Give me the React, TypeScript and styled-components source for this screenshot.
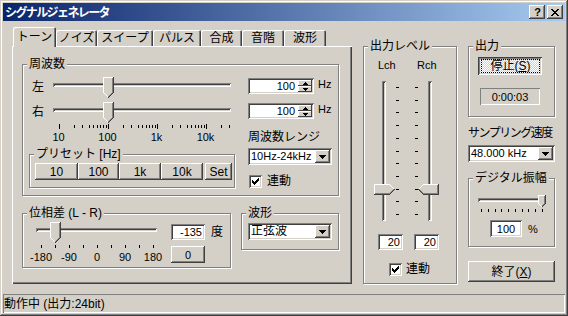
import React from "react";
import styled, { createGlobalStyle, css } from "styled-components";

const FACE = "#d4d0c8";
const HI = "#ffffff";
const SH = "#808080";
const DK = "#404040";

const GlobalStyle = createGlobalStyle`
  html, body { margin: 0; padding: 0; background: ${FACE}; }
  body {
    font-family: "Liberation Sans", "Noto Sans CJK JP", sans-serif;
    font-size: 12px;
    line-height: 14px;
    color: #000;
  }
  *, *::before, *::after { box-sizing: border-box; }
`;

const raised = css`
  box-shadow: inset -1px -1px ${DK}, inset 1px 1px ${HI}, inset -2px -2px ${SH}, inset 2px 2px ${FACE};
`;
const sunken = css`
  box-shadow: inset 1px 1px ${SH}, inset -1px -1px ${HI}, inset 2px 2px ${DK}, inset -2px -2px ${FACE};
`;

/* ---------- pixel drawings ---------- */
const PixSvg = styled.svg`
  display: block;
  flex: none;
`;

const COLORS: Record<string, string> = { w: HI, d: DK, g: SH, f: FACE, k: "#000" };

const PixelArt = ({ rows }: { rows: string[] }) => {
  const paths: Record<string, string> = {};
  rows.forEach((r, y) => {
    for (let x = 0; x < r.length; x++) {
      const c = r[x];
      if (c === ".") continue;
      paths[c] = (paths[c] || "") + `M${x} ${y}h1v1h-1z`;
    }
  });
  const w = Math.max(...rows.map((r) => r.length));
  const h = rows.length;
  return (
    <PixSvg width={w} height={h} viewBox={`0 0 ${w} ${h}`} shapeRendering="crispEdges">
      {Object.entries(paths).map(([c, d]) => (
        <path key={c} d={d} fill={COLORS[c]} />
      ))}
    </PixSvg>
  );
};

function downThumb(w: number, body: number): string[] {
  const rows: string[] = [];
  rows.push("w".repeat(w - 1) + "d");
  for (let y = 1; y < body; y++) rows.push("w" + "f".repeat(w - 3) + "gd");
  for (let k = 1; ; k++) {
    const left = k;
    const right = w - 1 - k;
    if (left > right) break;
    let r = "";
    for (let x = 0; x < w; x++) {
      if (x < left || x > right) r += ".";
      else if (x === right) r += "d";
      else if (x === left) r += "w";
      else if (x === right - 1) r += "g";
      else r += "f";
    }
    rows.push(r);
  }
  return rows;
}
function transpose(rows: string[]): string[] {
  const w = rows[0].length;
  const out: string[] = [];
  for (let x = 0; x < w; x++) out.push(rows.map((r) => r[x] || ".").join(""));
  return out;
}
const THUMB_DOWN = downThumb(11, 16);
const THUMB_SMALL = downThumb(8, 9);
const THUMB_RIGHT = transpose(THUMB_DOWN);
const THUMB_LEFT = THUMB_RIGHT.map((r, y) => {
  const m = r.split("").reverse();
  const last = m.length - 1;
  m[last] = "d";
  if (y > 0 && y < THUMB_RIGHT.length - 1) m[last - 1] = "g";
  return m.join("");
});

const CLOSE_X = ["XX....XX", ".XX..XX.", "..XXXX..", "...XX...", "..XXXX..", ".XX..XX.", "XX....XX"].map((r) =>
  r.replace(/X/g, "k")
);
const CHECK = ["......k", ".....kk", "k...kkk", "kk.kkk.", "kkkkk..", ".kkk...", "..k...."];
const ARROW_DOWN = ["kkkkkkk", ".kkkkk.", "..kkk..", "...k..."];
const SPIN_UP = ["..k..", ".kkk.", "kkkkk"];
const SPIN_DOWN = ["kkkkk", ".kkk.", "..k.."];

/* ---------- window frame ---------- */
const Win = styled.div`
  width: 568px;
  height: 316px;
  padding: 3px;
  background: ${FACE};
  box-shadow: inset -1px -1px ${DK}, inset 1px 1px ${FACE}, inset -2px -2px ${SH}, inset 2px 2px ${HI};
  display: flex;
  flex-direction: column;
  overflow: hidden;
`;
const TitleBar = styled.div`
  flex: none;
  height: 18px;
  display: flex;
  align-items: center;
  padding: 0 2px;
  background: linear-gradient(to right, #0a246a, #a6caf0);
`;
const TitleText = styled.div`
  flex: 1;
  color: #fff;
  font-weight: bold;
  font-family: "Noto Sans CJK JP", sans-serif;
  font-size: 12px;
  line-height: 14px;
  letter-spacing: -1.6px;
  white-space: nowrap;
`;
const CapButtons = styled.div`
  display: flex;
  gap: 2px;
`;
const CapButton = styled.div`
  width: 16px;
  height: 14px;
  background: ${FACE};
  ${raised};
  display: flex;
  align-items: center;
  justify-content: center;
`;
const HelpGlyph = styled.span`
  font: bold 11px/11px "Liberation Sans", sans-serif;
  margin-left: 1px;
`;

const Body = styled.div`
  flex: 1;
  min-height: 0;
  display: flex;
  padding: 6px 0 0 9px;
`;

/* ---------- tabs ---------- */
const TabCol = styled.div`
  flex: none;
  width: 340px;
  display: flex;
  flex-direction: column;
`;
const TabRow = styled.div`
  height: 19px;
  display: flex;
  align-items: flex-end;
  padding-left: 1px;
  position: relative;
  z-index: 1;
`;
const Tab = styled.div<{ $w: number; $active?: boolean }>`
  flex: none;
  width: ${(p) => p.$w}px;
  height: ${(p) => (p.$active ? 20 : 16)}px;
  margin-bottom: ${(p) => (p.$active ? -1 : 0)}px;
  background: ${FACE};
  border-radius: 2px 2px 0 0;
  box-shadow: inset 1px 1px ${HI}, inset -1px 0 ${DK}, inset -2px 0 ${SH};
  display: flex;
  align-items: center;
  justify-content: center;
  white-space: nowrap;
`;
const Panel = styled.div`
  height: 238px;
  background: ${FACE};
  box-shadow: inset 1px 1px ${HI}, inset -1px -1px ${DK}, inset -2px -2px ${SH};
  padding: 18px 0 0 10px;
`;

/* ---------- group box ---------- */
const Group = styled.div<{ $w: number; $h: number }>`
  position: relative;
  flex: none;
  width: ${(p) => p.$w}px;
  height: ${(p) => p.$h}px;
  border: 1px solid ${SH};
  box-shadow: 1px 1px 0 ${HI}, inset 1px 1px 0 ${HI};
`;
const Legend = styled.span`
  position: absolute;
  top: -8px;
  left: 4px;
  padding: 0 2px;
  background: ${FACE};
  line-height: 14px;
  white-space: nowrap;
`;

/* ---------- controls ---------- */
const Btn = styled.div<{ $w: number; $h: number }>`
  flex: none;
  width: ${(p) => p.$w}px;
  height: ${(p) => p.$h}px;
  background: ${FACE};
  ${raised};
  display: flex;
  align-items: center;
  justify-content: center;
  white-space: nowrap;
`;
const HTrack = styled.div<{ $w: number; $h: number; $ch: number }>`
  position: relative;
  flex: none;
  width: ${(p) => p.$w}px;
  height: ${(p) => p.$h}px;
  padding-top: ${(p) => p.$ch}px;
`;
const HChannel = styled.div`
  height: 4px;
  box-shadow: inset 1px 1px ${SH}, inset -1px -1px ${HI}, inset 2px 2px ${DK}, inset -2px -2px ${FACE};
`;
const HThumbSlot = styled.div`
  position: absolute;
  top: 0;
`;
const VSlider = styled.div<{ $w: number; $ch: number }>`
  position: relative;
  flex: none;
  width: ${(p) => p.$w}px;
  height: 140px;
  padding-left: ${(p) => p.$ch}px;
`;
const VChannel = styled.div`
  width: 4px;
  height: 140px;
  box-shadow: inset 1px 1px ${SH}, inset -1px -1px ${HI}, inset 2px 2px ${DK}, inset -2px -2px ${FACE};
`;
const VThumbSlot = styled.div<{ $left: number }>`
  position: absolute;
  left: ${(p) => p.$left}px;
`;
const SpinBox = styled.div`
  flex: none;
  width: 66px;
  height: 16px;
  margin: 1px 0 0 17px;
  background: #fff;
  ${sunken};
  display: flex;
  align-items: center;
  padding: 2px;
`;
const SpinValue = styled.span`
  flex: 1;
  text-align: right;
  padding-right: 3px;
  font-size: 11px;
  line-height: 12px;
`;
const SpinBtns = styled.div`
  flex: none;
  width: 14px;
  height: 12px;
  display: flex;
  flex-direction: column;
`;
const SpinBtn = styled.div`
  flex: 1;
  background: ${FACE};
  box-shadow: inset -1px -1px ${DK}, inset 1px 1px ${HI};
  display: flex;
  align-items: center;
  justify-content: center;
`;
const UnitLabel = styled.span<{ $ml: number }>`
  margin-left: ${(p) => p.$ml}px;
  font-size: 11px;
  white-space: nowrap;
`;
const Combo = styled.div<{ $w: number }>`
  flex: none;
  width: ${(p) => p.$w}px;
  height: 17px;
  background: #fff;
  ${sunken};
  display: flex;
  align-items: center;
  padding: 2px;
`;
const ComboText = styled.span<{ $latin?: boolean }>`
  flex: 1;
  min-width: 0;
  padding-left: 1px;
  font-size: ${(p) => (p.$latin ? 11 : 12)}px;
  line-height: 13px;
  white-space: nowrap;
  overflow: hidden;
`;
const ComboBtn = styled.div`
  flex: none;
  width: 15px;
  height: 13px;
  background: ${FACE};
  ${raised};
  display: flex;
  align-items: center;
  justify-content: center;
`;
const CheckBox = styled.div`
  flex: none;
  width: 13px;
  height: 13px;
  background: #fff;
  ${sunken};
  display: flex;
  align-items: center;
  justify-content: center;
`;
const CheckRow = styled.div<{ $mt: number; $ml: number; $gap: number }>`
  display: flex;
  align-items: center;
  margin: ${(p) => p.$mt}px 0 0 ${(p) => p.$ml}px;
  gap: ${(p) => p.$gap}px;
  white-space: nowrap;
`;
const NumBox = styled.div<{ $w: number; $h: number; $center?: boolean }>`
  flex: none;
  width: ${(p) => p.$w}px;
  height: ${(p) => p.$h}px;
  background: #fff;
  ${sunken};
  display: flex;
  align-items: center;
  justify-content: ${(p) => (p.$center ? "center" : "flex-end")};
  padding: 0 3px;
  font-size: 11px;
`;
const TickSvg = styled.svg<{ $ml: number }>`
  display: block;
  flex: none;
  margin-left: ${(p) => p.$ml}px;
`;
const TickLabels = styled.div<{ $ml: number }>`
  display: flex;
  height: 14px;
  margin-left: ${(p) => p.$ml}px;
`;
const TickLabel = styled.span<{ $w: number }>`
  flex: none;
  width: ${(p) => p.$w}px;
  text-align: center;
  font-size: 11px;
  white-space: nowrap;
`;

/* ---------- frequency group ---------- */
const FreqGroup = styled(Group)`
  padding: 12px 0 0 6px;
  display: flex;
  flex-direction: column;
`;
const SliderRow = styled.div`
  display: flex;
  height: 20px;
  margin-left: 3px;
  & + & {
    margin-top: 5px;
  }
`;
const SideLabel = styled.span`
  flex: none;
  width: 21px;
  line-height: 20px;
`;
const FreqLower = styled.div`
  display: flex;
`;
const FreqLowerLeft = styled.div`
  flex: none;
  width: 206px;
  display: flex;
  flex-direction: column;
`;
const PresetGroup = styled(Group)`
  margin-top: 10px;
  padding: 8px 0 0 5px;
  display: flex;
`;
const SetBtn = styled(Btn)`
  margin-left: 2px;
`;
const FreqLowerRight = styled.div`
  margin-left: 13px;
  padding-top: 8px;
  display: flex;
  flex-direction: column;
`;
const PlainLabel = styled.span`
  white-space: nowrap;
`;
const RangeCombo = styled(Combo)`
  margin-top: 4px;
`;

/* ---------- lower row ---------- */
const LowerRow = styled.div`
  display: flex;
  margin-top: 17px;
`;
const PhaseGroup = styled(Group)`
  padding: 8px 0 0 13px;
  display: flex;
`;
const PhaseLeft = styled.div`
  flex: none;
  width: 121px;
  display: flex;
  flex-direction: column;
`;
const PhaseRight = styled.div`
  margin: 2px 0 0 14px;
  display: flex;
  flex-direction: column;
`;
const ValRow = styled.div<{ $mt?: number; $ml?: number }>`
  display: flex;
  align-items: center;
  margin: ${(p) => p.$mt || 0}px 0 0 ${(p) => p.$ml || 0}px;
`;
const SuffixLabel = styled.span<{ $ml: number }>`
  margin-left: ${(p) => p.$ml}px;
  white-space: nowrap;
`;
const ZeroBtn = styled(Btn)`
  margin-top: 6px;
  font-size: 11px;
`;
const WaveGroup = styled(Group)`
  margin-left: 10px;
  padding: 9px 0 0 6px;
`;

/* ---------- level group ---------- */
const LevelGroup = styled(Group)`
  margin: 19px 0 0 11px;
  padding-top: 11px;
  display: flex;
  flex-direction: column;
`;
const ChanLabels = styled.div`
  display: flex;
  margin-left: 14px;
`;
const ChanLabel = styled.span`
  width: 41px;
  font-size: 11px;
`;
const VArea = styled.div`
  display: flex;
  height: 140px;
  margin: 9px 0 0 10px;
`;
const BoxesRow = styled.div`
  display: flex;
  gap: 11px;
  margin: 13px 0 0 14px;
`;

/* ---------- right column ---------- */
const RightCol = styled.div`
  flex: none;
  width: 87px;
  margin-left: 11px;
  display: flex;
  flex-direction: column;
`;
const OutGroup = styled(Group)`
  margin-top: 19px;
  padding: 10px 0 0 9px;
  display: flex;
  flex-direction: column;
`;
const StopBtn = styled.div`
  flex: none;
  width: 64px;
  height: 18px;
  padding: 2px 2px 2px 3px;
  background: repeating-conic-gradient(${HI} 0 25%, ${FACE} 0 50%) 0 0 / 2px 2px;
  box-shadow: inset 1px 1px ${DK}, inset -1px -1px ${HI}, inset 2px 2px ${SH}, inset -2px -2px ${FACE};
  display: flex;
`;
const FocusRect = styled.div`
  flex: 1;
  border: 1px dotted #000;
  display: flex;
  align-items: center;
  justify-content: center;
  white-space: nowrap;
  line-height: 12px;
`;
const TimeBox = styled.div`
  flex: none;
  width: 60px;
  height: 17px;
  margin: 13px 0 0 2px;
  box-shadow: inset 1px 1px ${SH}, inset -1px -1px ${HI};
  display: flex;
  align-items: center;
  justify-content: center;
  font-size: 11px;
`;
const SampleLabel = styled.span`
  margin-top: 9px;
  letter-spacing: -1.5px;
  white-space: nowrap;
`;
const SampleCombo = styled(Combo)`
  margin-top: 5px;
`;
const AmpGroup = styled(Group)`
  margin-top: 16px;
  padding: 16px 0 0 9px;
  display: flex;
  flex-direction: column;
`;
const ExitBtn = styled(Btn)`
  margin-top: 14px;
`;

const StatusBar = styled.div`
  flex: none;
  height: 19px;
  box-shadow: inset 1px 1px ${SH}, inset -1px -1px ${HI};
  padding-left: 1px;
  display: flex;
  align-items: center;
  white-space: nowrap;
`;

/* ---------- data ---------- */
const TABS = [
  { label: "トーン", w: 43 },
  { label: "ノイズ", w: 41 },
  { label: "スイープ", w: 56 },
  { label: "パルス", w: 48 },
  { label: "合成", w: 41 },
  { label: "音階", w: 42 },
  { label: "波形", w: 42 },
];
const PRESETS = [
  { label: "10", w: 43 },
  { label: "100", w: 41 },
  { label: "1k", w: 42 },
  { label: "10k", w: 42 },
];

const FREQ_X0 = 6;
const DECADE = 49;
const freqX = (v: number) => Math.round(FREQ_X0 + DECADE * Math.log10(v / 10));
const FREQ_TICKS: { x: number; major: boolean }[] = [];
for (let d = 0; d < 4; d++) {
  for (let m = 1; m <= 9; m++) {
    const v = m * Math.pow(10, d);
    if (v > 20000) break;
    FREQ_TICKS.push({ x: Math.round(FREQ_X0 + DECADE * (d + Math.log10(m))), major: m === 1 });
  }
}
const PHASE_TICKS = Array.from({ length: 9 }, (_, i) => 5 + 14 * i);
const phaseX = (deg: number) => Math.round(5 + (112 * (deg + 180)) / 360);
const AMP_TICKS = Array.from({ length: 10 }, (_, i) => Math.round(3 + 6.78 * i));
const DASH_Y = Array.from({ length: 11 }, (_, i) => Math.round(6 + 12.7 * i));

const Spinner = ({ value }: { value: string }) => (
  <SpinBox>
    <SpinValue>{value}</SpinValue>
    <SpinBtns>
      <SpinBtn>
        <PixelArt rows={SPIN_UP} />
      </SpinBtn>
      <SpinBtn>
        <PixelArt rows={SPIN_DOWN} />
      </SpinBtn>
    </SpinBtns>
  </SpinBox>
);

const ComboArrow = () => (
  <ComboBtn>
    <PixelArt rows={ARROW_DOWN} />
  </ComboBtn>
);

const FreqSlider = ({ side, value }: { side: string; value: number }) => (
  <SliderRow>
    <SideLabel>{side}</SideLabel>
    <HTrack $w={178} $h={20} $ch={6}>
      <HChannel />
      <HThumbSlot style={{ left: freqX(value) - 5 }}>
        <PixelArt rows={THUMB_DOWN} />
      </HThumbSlot>
    </HTrack>
    <Spinner value={String(value)} />
    <UnitLabel $ml={4}>Hz</UnitLabel>
  </SliderRow>
);

export default function App() {
  const levelThumbTop = DASH_Y[8] - 5;
  return (
    <>
      <GlobalStyle />
      <Win>
        <TitleBar>
          <TitleText>シグナルジェネレータ</TitleText>
          <CapButtons>
            <CapButton>
              <HelpGlyph>?</HelpGlyph>
            </CapButton>
            <CapButton>
              <PixelArt rows={CLOSE_X} />
            </CapButton>
          </CapButtons>
        </TitleBar>

        <Body>
          <TabCol>
            <TabRow>
              {TABS.map((t, i) => (
                <Tab key={t.label} $w={t.w} $active={i === 0}>
                  {t.label}
                </Tab>
              ))}
            </TabRow>
            <Panel>
              <FreqGroup $w={317} $h={132}>
                <Legend>周波数</Legend>
                <FreqSlider side="左" value={100} />
                <FreqSlider side="右" value={100} />
                <FreqLower>
                  <FreqLowerLeft>
                    <TickSvg $ml={24} width={178} height={8}>
                      {FREQ_TICKS.map((t) => (
                        <rect key={t.x} x={t.x} y={t.major ? 2 : 3} width={1} height={t.major ? 5 : 3} fill="#000" />
                      ))}
                    </TickSvg>
                    <TickLabels $ml={5}>
                      {["10", "100", "1k", "10k"].map((l) => (
                        <TickLabel key={l} $w={49}>
                          {l}
                        </TickLabel>
                      ))}
                    </TickLabels>
                    <PresetGroup $w={206} $h={34}>
                      <Legend>プリセット [Hz]</Legend>
                      {PRESETS.map((p) => (
                        <Btn key={p.label} $w={p.w} $h={17}>
                          {p.label}
                        </Btn>
                      ))}
                      <SetBtn $w={27} $h={17}>
                        Set
                      </SetBtn>
                    </PresetGroup>
                  </FreqLowerLeft>
                  <FreqLowerRight>
                    <PlainLabel>周波数レンジ</PlainLabel>
                    <RangeCombo $w={84}>
                      <ComboText $latin>10Hz-24kHz</ComboText>
                      <ComboArrow />
                    </RangeCombo>
                    <CheckRow $mt={9} $ml={1} $gap={5}>
                      <CheckBox>
                        <PixelArt rows={CHECK} />
                      </CheckBox>
                      <span>連動</span>
                    </CheckRow>
                  </FreqLowerRight>
                </FreqLower>
              </FreqGroup>

              <LowerRow>
                <PhaseGroup $w={209} $h={55}>
                  <Legend>位相差 (L - R)</Legend>
                  <PhaseLeft>
                    <HTrack $w={121} $h={20} $ch={6}>
                      <HChannel />
                      <HThumbSlot style={{ left: phaseX(-135) - 5 }}>
                        <PixelArt rows={THUMB_DOWN} />
                      </HThumbSlot>
                    </HTrack>
                    <TickSvg $ml={0} width={121} height={8}>
                      {PHASE_TICKS.map((x) => (
                        <rect key={x} x={x} y={3} width={1} height={3} fill="#000" />
                      ))}
                    </TickSvg>
                    <TickLabels $ml={-9}>
                      {["-180", "-90", "0", "90", "180"].map((l) => (
                        <TickLabel key={l} $w={28}>
                          {l}
                        </TickLabel>
                      ))}
                    </TickLabels>
                  </PhaseLeft>
                  <PhaseRight>
                    <ValRow>
                      <NumBox $w={34} $h={16}>
                        -135
                      </NumBox>
                      <SuffixLabel $ml={6}>度</SuffixLabel>
                    </ValRow>
                    <ZeroBtn $w={34} $h={17}>
                      0
                    </ZeroBtn>
                  </PhaseRight>
                </PhaseGroup>
                <WaveGroup $w={98} $h={37}>
                  <Legend>波形</Legend>
                  <Combo $w={84}>
                    <ComboText>正弦波</ComboText>
                    <ComboArrow />
                  </Combo>
                </WaveGroup>
              </LowerRow>
            </Panel>
          </TabCol>

          <LevelGroup $w={94} $h={238}>
            <Legend>出力レベル</Legend>
            <ChanLabels>
              <ChanLabel>Lch</ChanLabel>
              <ChanLabel>Rch</ChanLabel>
            </ChanLabels>
            <VArea>
              <VSlider $w={21} $ch={8}>
                <VChannel />
                <VThumbSlot $left={0} style={{ top: levelThumbTop }}>
                  <PixelArt rows={THUMB_RIGHT} />
                </VThumbSlot>
              </VSlider>
              <TickSvg $ml={0} width={23} height={140}>
                {DASH_Y.map((y) => (
                  <g key={y}>
                    <rect x={1} y={y} width={3} height={1} fill="#000" />
                    <rect x={20} y={y} width={3} height={1} fill="#000" />
                  </g>
                ))}
              </TickSvg>
              <VSlider $w={22} $ch={10}>
                <VChannel />
                <VThumbSlot $left={0} style={{ top: levelThumbTop }}>
                  <PixelArt rows={THUMB_LEFT} />
                </VThumbSlot>
              </VSlider>
            </VArea>
            <BoxesRow>
              <NumBox $w={25} $h={16}>
                20
              </NumBox>
              <NumBox $w={25} $h={16}>
                20
              </NumBox>
            </BoxesRow>
            <CheckRow $mt={12} $ml={25} $gap={4}>
              <CheckBox>
                <PixelArt rows={CHECK} />
              </CheckBox>
              <span>連動</span>
            </CheckRow>
          </LevelGroup>

          <RightCol>
            <OutGroup $w={87} $h={71}>
              <Legend>出力</Legend>
              <StopBtn>
                <FocusRect>
                  停止(<u>S</u>)
                </FocusRect>
              </StopBtn>
              <TimeBox>0:00:03</TimeBox>
            </OutGroup>
            <SampleLabel>サンプリング速度</SampleLabel>
            <SampleCombo $w={87}>
              <ComboText $latin>48.000 kHz</ComboText>
              <ComboArrow />
            </SampleCombo>
            <AmpGroup $w={87} $h={69}>
              <Legend>デジタル振幅</Legend>
              <HTrack $w={66} $h={13} $ch={3}>
                <HChannel />
                <HThumbSlot style={{ left: AMP_TICKS[9] - 4 }}>
                  <PixelArt rows={THUMB_SMALL} />
                </HThumbSlot>
              </HTrack>
              <TickSvg $ml={0} width={66} height={5}>
                {AMP_TICKS.map((x) => (
                  <rect key={x} x={x} y={1} width={1} height={3} fill="#000" />
                ))}
              </TickSvg>
              <ValRow $mt={7} $ml={12}>
                <NumBox $w={32} $h={17} $center>
                  100
                </NumBox>
                <UnitLabel $ml={6}>%</UnitLabel>
              </ValRow>
            </AmpGroup>
            <ExitBtn $w={87} $h={21}>
              終了(<u>X</u>)
            </ExitBtn>
          </RightCol>
        </Body>

        <StatusBar>動作中 (出力:24bit)</StatusBar>
      </Win>
    </>
  );
}
